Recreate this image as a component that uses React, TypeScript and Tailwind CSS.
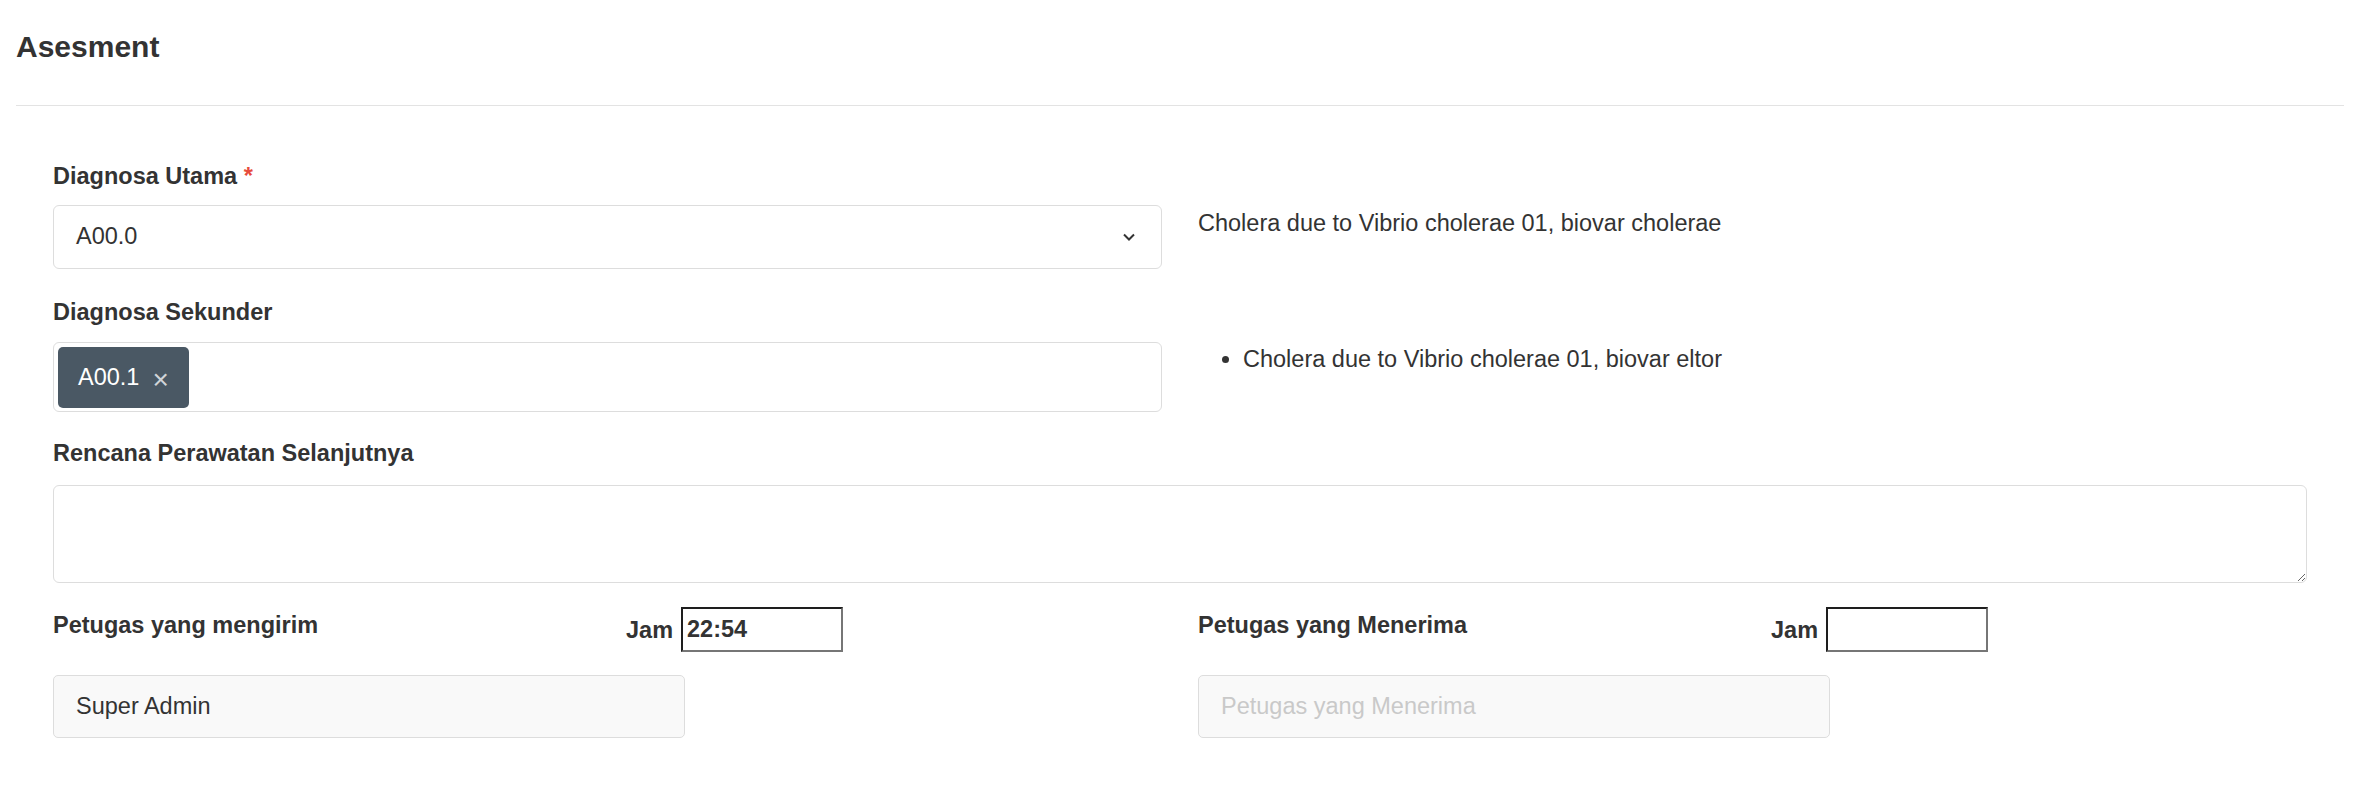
import { useState } from 'react';

const ChevronDown = () => (
  <svg width="12" height="8" viewBox="0 0 12 8" fill="none" className="flex-none">
    <path d="M1 1.5L6 6.5L11 1.5" stroke="#333" strokeWidth="2" />
  </svg>
);

const Label = ({ children, required }: { children: React.ReactNode; required?: boolean }) => (
  <label className="block font-bold leading-[33px]">
    {children}
    {required && <span className="text-[#e74c3c]"> *</span>}
  </label>
);

const JamInput = ({ value }: { value: string }) => (
  <input
    type="text"
    defaultValue={value}
    className="w-[162px] h-[45px] border-2 border-t-[#1e1e1e] border-l-[#1e1e1e] border-b-[#767676] border-r-[#767676] bg-white pl-[4px] font-bold text-[#333] outline-none"
  />
);

const Petugas = ({ label, value, placeholder, jam }: { label: string; value?: string; placeholder: string; jam: string }) => (
  <div>
    <div className="flex items-start">
      <div className="w-[573px] flex-none pt-[2px]">
        <Label>{label}</Label>
      </div>
      <div className="flex items-center">
        <span className="font-bold mt-[3px] mr-[8px]">Jam</span>
        <JamInput value={jam} />
      </div>
    </div>
    <input
      type="text"
      readOnly
      value={value}
      placeholder={placeholder}
      className="mt-[23px] block w-[632px] h-[63px] rounded-[5px] border border-[#ddd] bg-[#f9f9f9] px-[22px] text-[#333] placeholder:text-[#c9c9c9] outline-none"
    />
  </div>
);

export default function App() {
  const [tags, setTags] = useState(['A00.1']);

  return (
    <div className="min-h-[810px] bg-white px-4 text-[23.5px] text-[#333] font-['Liberation_Sans',Helvetica,Arial,sans-serif]">
      {/* Header */}
      <div className="pt-[30px] pb-[42px] border-b border-[#e3e3e3]">
        <h3 className="text-[30px] leading-[33px] font-bold">Asesment</h3>
      </div>

      {/* Form */}
      <div className="px-[37px] pt-[54px]">
        <div className="grid grid-cols-2 gap-x-[36px]">
          <div>
            <Label required>Diagnosa Utama</Label>
            <div className="mt-[12px] h-[64px] flex items-center justify-between rounded-[6px] border border-[#ddd] bg-white pl-[22px] pr-[26px]">
              <span>A00.0</span>
              <ChevronDown />
            </div>
          </div>
          <div className="pt-[47px] leading-[33px]">Cholera due to Vibrio cholerae 01, biovar cholerae</div>
        </div>

        <div className="mt-[27px] grid grid-cols-2 gap-x-[36px]">
          <div>
            <Label>Diagnosa Sekunder</Label>
            <div className="mt-[13px] h-[70px] flex items-start rounded-[6px] border border-[#ddd] bg-white pl-[4px] pt-[4px]">
              {tags.map((tag) => (
                <span
                  key={tag}
                  className="flex items-center h-[61px] rounded-[5px] bg-[#4a5864] pl-[20px] pr-[20px] text-white"
                >
                  {tag}
                  <button
                    onClick={() => setTags(tags.filter((t) => t !== tag))}
                    className="ml-[13px] mt-[5px] text-[#d0d4d8] text-[28px] leading-none"
                  >
                    ×
                  </button>
                </span>
              ))}
            </div>
          </div>
          <ul className="pt-[47px] pl-[45px] list-disc leading-[33px]">
            <li>Cholera due to Vibrio cholerae 01, biovar eltor</li>
          </ul>
        </div>

        <div className="mt-[25px]">
          <Label>Rencana Perawatan Selanjutnya</Label>
          <textarea className="mt-[15px] block w-full h-[98px] rounded-[6px] border border-[#ddd] bg-white outline-none" />
        </div>

        <div className="mt-[24px] grid grid-cols-2 gap-x-[36px]">
          <Petugas label="Petugas yang mengirim" value="Super Admin" placeholder="Petugas yang mengirim" jam="22:54" />
          <Petugas label="Petugas yang Menerima" value="" placeholder="Petugas yang Menerima" jam="" />
        </div>
      </div>
    </div>
  );
}
